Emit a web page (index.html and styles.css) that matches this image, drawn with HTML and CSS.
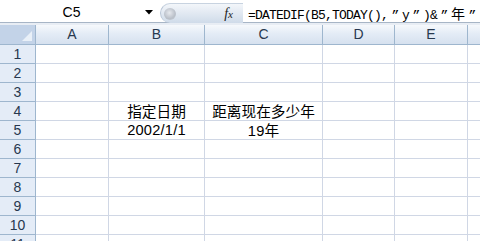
FILE: index.html
```html
<!DOCTYPE html>
<html>
<head>
<meta charset="utf-8">
<link rel="stylesheet" href="styles.css">
</head>
<body>
<div class="app">
  <div class="fbar">
    <div class="namebox">
      <span class="ref">C5</span>
      <svg class="dd" width="8" height="5" viewBox="0 0 8 5"><path d="M0 0H8L4 4.5Z" fill="#000"/></svg>
    </div>
    <div class="fxbtn">
      <span class="grip"></span>
      <span class="fx"><i>f</i><i class="x">x</i></span>
    </div>
    <div class="formula">=DATEDIF(B5,TODAY(),<span class="q">”</span>y<span class="q">”</span>)&amp;<span class="q">”</span><span class="cjk">年</span><span class="q">”</span></div>
  </div>
  <div class="gap"></div>
  <div class="grid">
    <div class="corner"><span class="tri"></span></div>
    <div class="ch">A</div><div class="ch">B</div><div class="ch">C</div><div class="ch">D</div><div class="ch">E</div><div class="ch last"></div>

    <div class="rh">1</div><div class="c"></div><div class="c"></div><div class="c"></div><div class="c"></div><div class="c"></div><div class="c last"></div>
    <div class="rh">2</div><div class="c"></div><div class="c"></div><div class="c"></div><div class="c"></div><div class="c"></div><div class="c last"></div>
    <div class="rh">3</div><div class="c"></div><div class="c"></div><div class="c"></div><div class="c"></div><div class="c"></div><div class="c last"></div>
    <div class="rh">4</div><div class="c"></div><div class="c t">指定日期</div><div class="c t">距离现在多少年</div><div class="c"></div><div class="c"></div><div class="c last"></div>
    <div class="rh">5</div><div class="c"></div><div class="c t num">2002/1/1</div><div class="c t"><span class="num">19</span>年</div><div class="c"></div><div class="c"></div><div class="c last"></div>
    <div class="rh">6</div><div class="c"></div><div class="c"></div><div class="c"></div><div class="c"></div><div class="c"></div><div class="c last"></div>
    <div class="rh">7</div><div class="c"></div><div class="c"></div><div class="c"></div><div class="c"></div><div class="c"></div><div class="c last"></div>
    <div class="rh">8</div><div class="c"></div><div class="c"></div><div class="c"></div><div class="c"></div><div class="c"></div><div class="c last"></div>
    <div class="rh">9</div><div class="c"></div><div class="c"></div><div class="c"></div><div class="c"></div><div class="c"></div><div class="c last"></div>
    <div class="rh">10</div><div class="c"></div><div class="c"></div><div class="c"></div><div class="c"></div><div class="c"></div><div class="c last"></div>
    <div class="rh">11</div><div class="c"></div><div class="c"></div><div class="c"></div><div class="c"></div><div class="c"></div><div class="c last"></div>
  </div>
</div>
</body>
</html>
```

FILE: styles.css
```css
html, body {
  margin: 0;
  padding: 0;
  background: #fff;
  width: 480px;
  height: 241px;
  overflow: hidden;
}
.app {
  width: 480px;
  height: 241px;
  overflow: hidden;
  font-family: "Liberation Sans", "Noto Sans CJK SC", sans-serif;
}
.fbar {
  height: 22px;
  display: flex;
  border-bottom: 1px solid #a7b5c6;
  background: #fff;
}
.namebox {
  width: 158px;
  display: flex;
  align-items: center;
  position: relative;
}
.ref {
  flex: 1;
  text-align: center;
  font-size: 14px;
  color: #000;
  padding-right: 2px;
  padding-top: 1px;
}
.dd {
  margin-right: 5px;
  margin-top: 2px;
}
.fxbtn {
  width: 82px;
  margin: 3px 0 0 2px;
  height: 19px;
  border-radius: 10px 0 0 10px;
  background: linear-gradient(#f3f6fa, #cfdbe9);
  display: flex;
  align-items: center;
  justify-content: space-between;
  border-left: 1px solid #b7c4d5;
  border-top: 1px solid #c8d3e0;
}
.grip {
  width: 12px;
  height: 12px;
  border-radius: 50%;
  margin-left: 3px;
  background: radial-gradient(circle at 45% 40%, #e6e9ee 0, #b9bfc8 60%, #cfd6df 100%);
}
.fx {
  font-family: "Liberation Serif", serif;
  font-style: italic;
  font-size: 14px;
  color: #222;
  margin-right: 10px;
}
.fx i { font-style: italic; }
.fx .x { font-size: 11px; }
.formula {
  flex: 1;
  padding-left: 5px;
  padding-top: 3px;
  font-family: "Liberation Mono", monospace;
  font-size: 13px;
  letter-spacing: -0.8px;
  color: #000;
  white-space: nowrap;
  overflow: hidden;
}
.formula .q {
  display: inline-block;
  width: 14px;
  text-align: center;
}
.formula .cjk {
  font-family: "Noto Sans CJK SC", sans-serif;
  font-size: 14px;
  letter-spacing: 0;
}
.gap {
  height: 2px;
  background: #e8edf4;
}
.grid {
  display: grid;
  grid-template-columns: 36px 73px 96px 118px 72px 73px 1fr;
  grid-auto-rows: 19px;
  grid-template-rows: 20px;
}
.corner {
  background: #c3d3e8;
  border-right: 1px solid #9eb6ce;
  border-bottom: 1px solid #9eb6ce;
  position: relative;
}
.tri {
  position: absolute;
  right: 3px;
  bottom: 3px;
  width: 0;
  height: 0;
  border-left: 10px solid transparent;
  border-bottom: 10px solid #e9f0f8;
}
.ch {
  background: linear-gradient(#f6f9fc 0, #e4ecf6 45%, #d6e1ef 100%);
  border-right: 1px solid #9eb6ce;
  border-bottom: 1px solid #9eb6ce;
  text-align: center;
  font-size: 14px;
  line-height: 19px;
  color: #27384f;
}
.rh {
  background: #e4ecf7;
  border-right: 1px solid #9eb6ce;
  border-bottom: 1px solid #9eb6ce;
  text-align: center;
  font-size: 14px;
  line-height: 18px;
  color: #27384f;
}
.c {
  border-right: 1px solid #d0d7e5;
  border-bottom: 1px solid #d0d7e5;
  background: #fff;
}
.last { border-right: 0; }
.t {
  text-align: center;
  font-size: 14.67px;
  line-height: 18px;
  color: #000;
  font-family: "Noto Sans CJK SC", sans-serif;
  white-space: nowrap;
}
.num {
  font-family: "Liberation Sans", sans-serif;
  letter-spacing: 0.2px;
}
```
